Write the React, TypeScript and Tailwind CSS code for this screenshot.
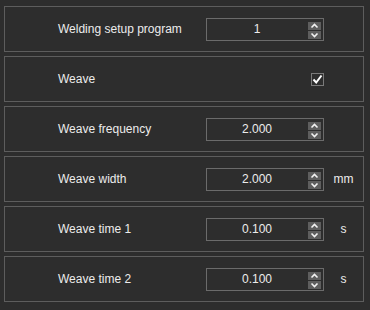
import React from "react";

const Up = () => (
  <svg width="13" height="8" viewBox="0 0 13 8">
    <polyline points="3.5,5.5 6.5,2.5 9.5,5.5" fill="none" stroke="#f2f2f2" strokeWidth="1.6" />
  </svg>
);
const Down = () => (
  <svg width="13" height="8" viewBox="0 0 13 8">
    <polyline points="3.5,2.5 6.5,5.5 9.5,2.5" fill="none" stroke="#f2f2f2" strokeWidth="1.6" />
  </svg>
);

function Spin({ value }: { value: string }) {
  return (
    <div className="relative w-[118px] h-[23px] border border-[#6b6b6b] flex items-center">
      <div className="w-[100px] text-center text-[12px] text-[#ececec] leading-none">{value}</div>
      <div className="absolute right-[2px] top-[3px] flex flex-col gap-[1px]">
        <div className="w-[13px] h-[8px] bg-[#5e5e5e] flex"><Up /></div>
        <div className="w-[13px] h-[8px] bg-[#5e5e5e] flex"><Down /></div>
      </div>
    </div>
  );
}

function Row({ label, value, unit, check }: { label: string; value?: string; unit?: string; check?: boolean }) {
  return (
    <div className="h-[46px] w-[360px] border border-[#5d5d5d] flex items-center">
      <div className="w-[201px] pl-[53px] text-[12px] text-[#ececec] leading-none">{label}</div>
      {check ? (
        <div className="w-[118px] flex justify-end">
          <div className="w-[13px] h-[13px] border border-[#7a7a7a] flex items-center justify-center">
            <svg width="11" height="11" viewBox="0 0 11 11">
              <polyline points="1.5,5.5 4.2,8.5 9.5,1.5" fill="none" stroke="#ffffff" strokeWidth="2" />
            </svg>
          </div>
        </div>
      ) : (
        <Spin value={value ?? ""} />
      )}
      <div className="flex-1 text-center text-[12px] text-[#ececec] leading-none">{unit}</div>
    </div>
  );
}

export default function App() {
  return (
    <div
      className="w-[370px] h-[310px] bg-[#2d2d2d] pt-[6px] pl-[4px] flex flex-col gap-[4px]"
      style={{ fontFamily: '"Liberation Sans", Arial, sans-serif' }}
    >
      <Row label="Welding setup program" value="1" />
      <Row label="Weave" check />
      <Row label="Weave frequency" value="2.000" />
      <Row label="Weave width" value="2.000" unit="mm" />
      <Row label="Weave time 1" value="0.100" unit="s" />
      <Row label="Weave time 2" value="0.100" unit="s" />
    </div>
  );
}
